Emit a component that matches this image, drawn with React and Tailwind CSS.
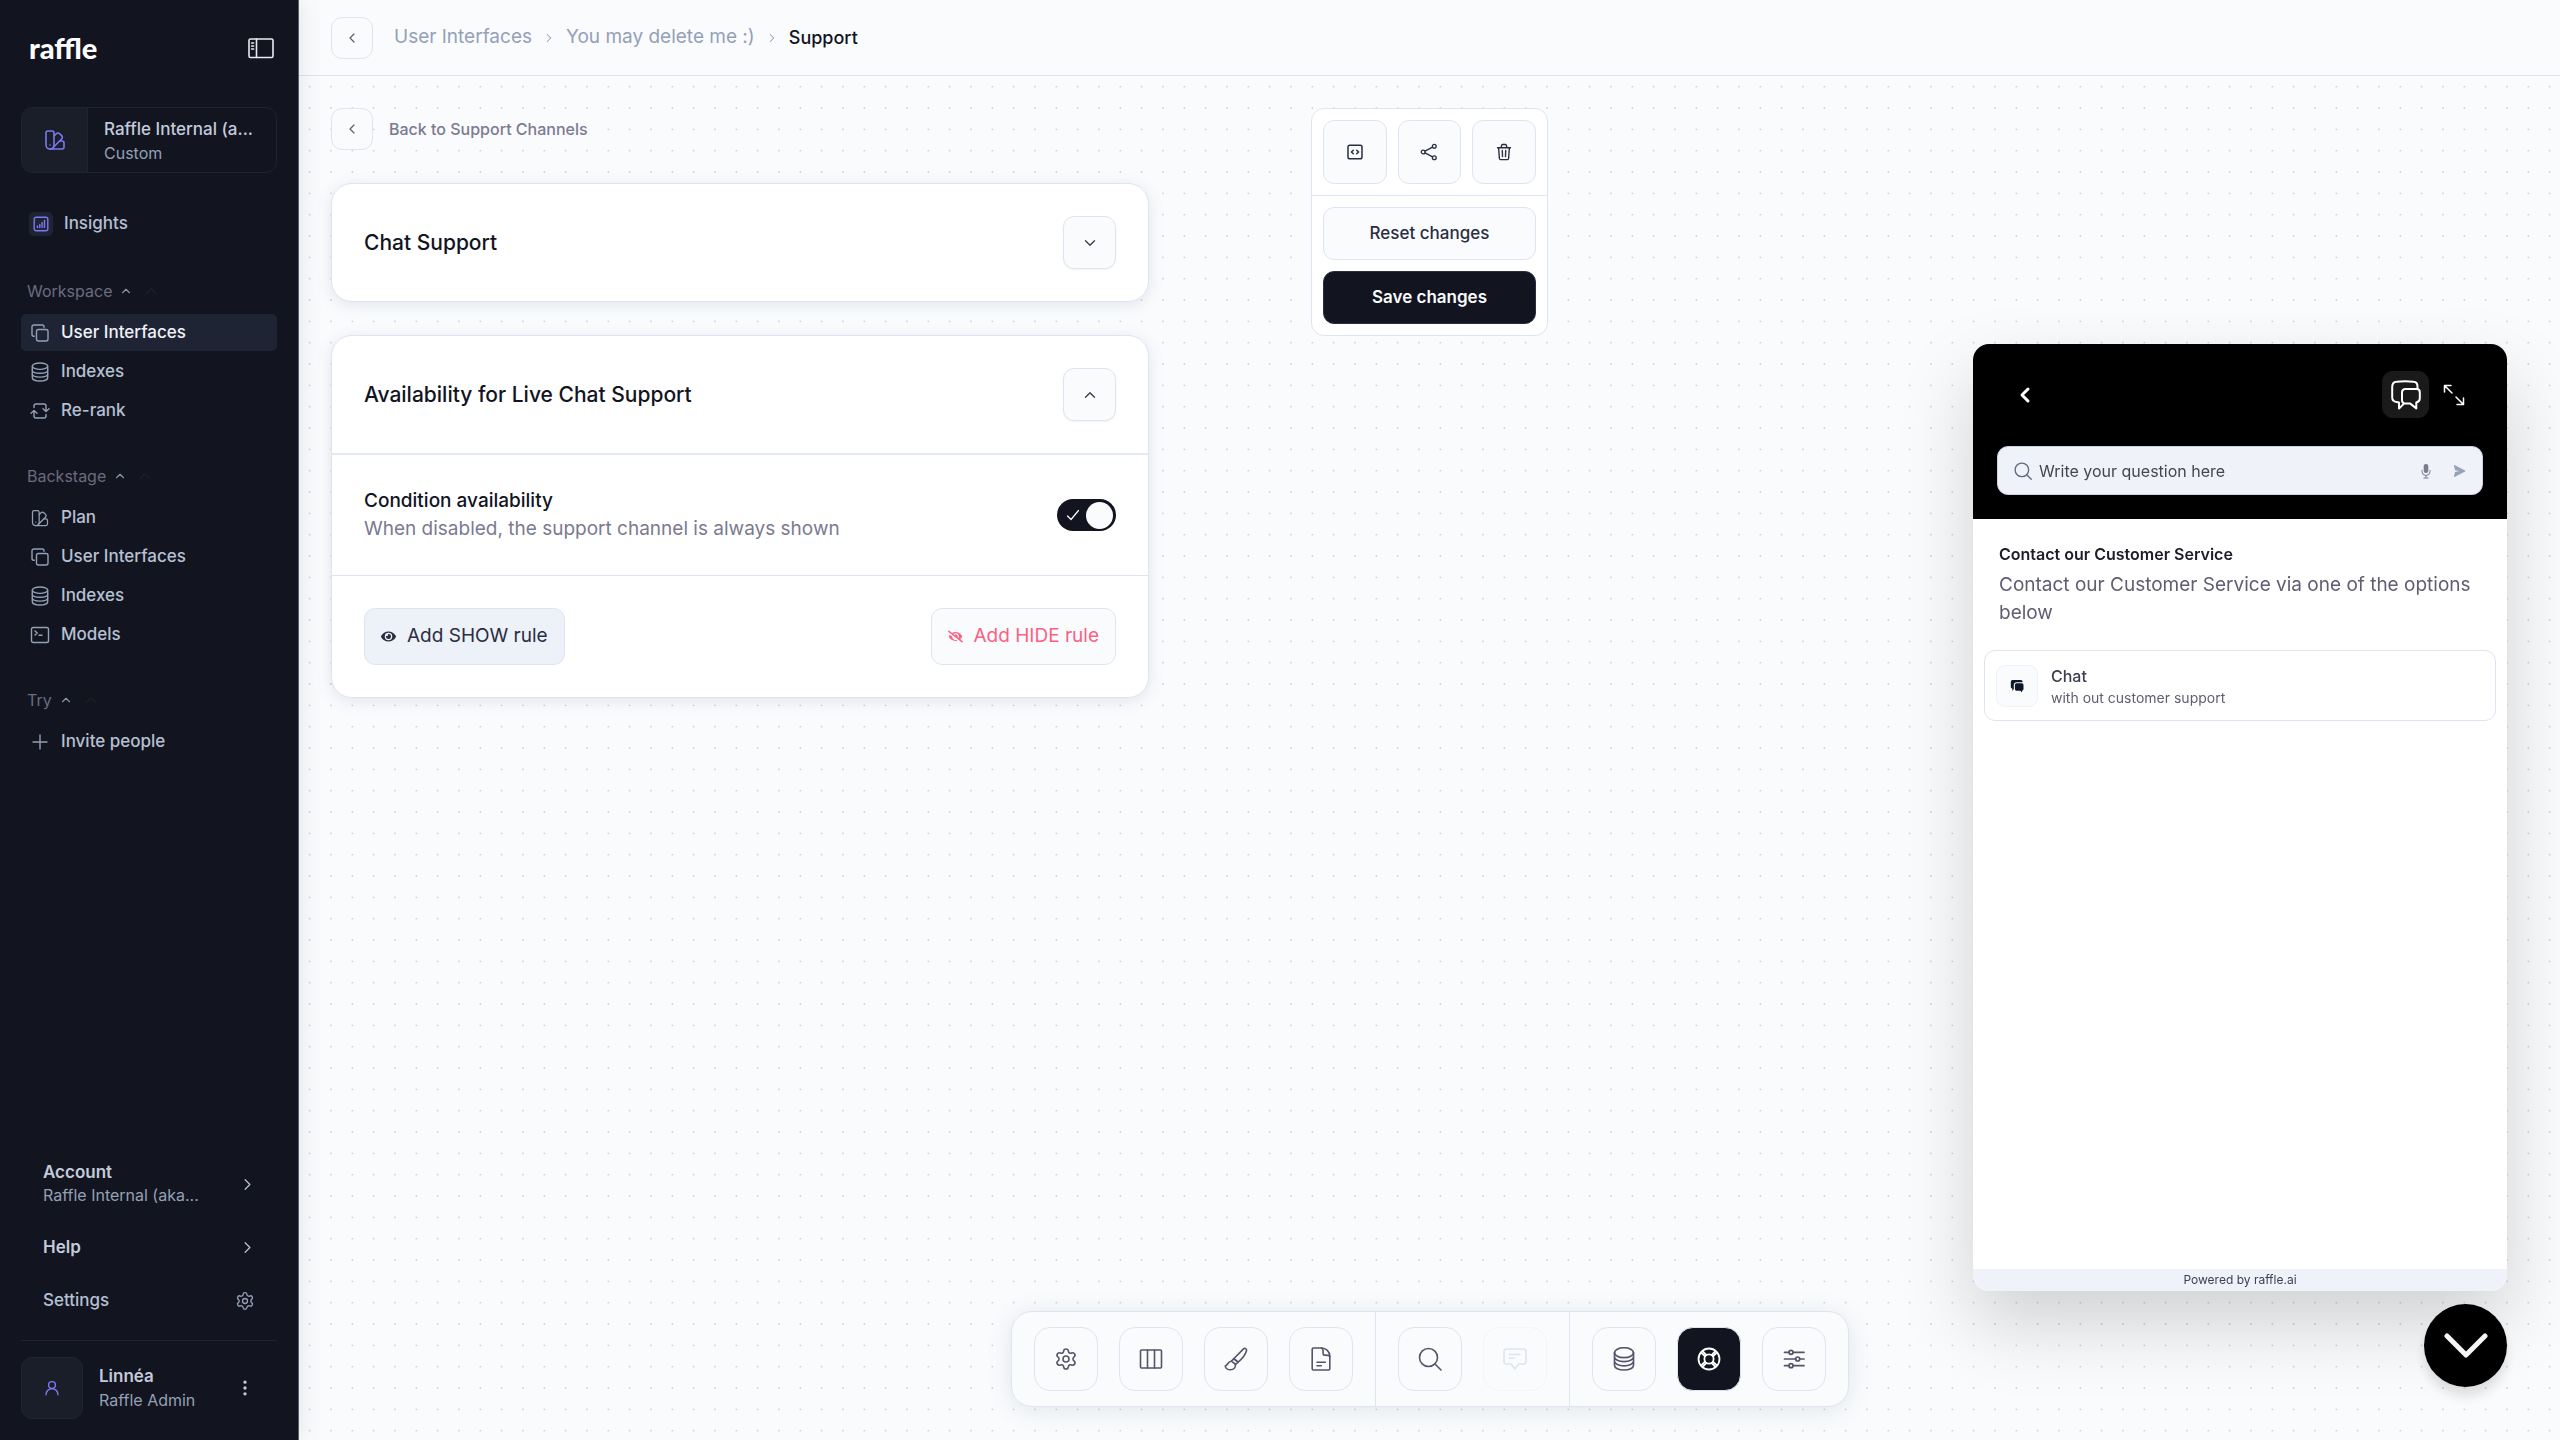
import { useState } from "react";
import { Settings, SwatchBook, EllipsisVertical, ChevronLeft, ChevronRight, ChevronUp, ChevronDown } from "lucide-react";
import { FaEye, FaEyeSlash } from "react-icons/fa";

const Svg = ({ box = 20, className, width = 1.4, children }) => (
  <svg
    viewBox={`0 0 ${box} ${box}`}
    className={className}
    fill="none"
    stroke="currentColor"
    strokeWidth={width}
    strokeLinecap="round"
    strokeLinejoin="round"
    aria-hidden="true"
  >
    {children}
  </svg>
);

const SidebarIcon = (p) => (
  <Svg box={26} width={1.6} {...p}>
    <rect x="1" y="4" width="24" height="18.5" rx="1.5" />
    <path d="M8.500 4v18.500M3.600 8h2M3.600 11h2M3.600 14h2" />
  </Svg>
);

const ChartIcon = (p) => (
  <Svg box={16} width={1.4} {...p}>
    <rect x="1.200" y="1.200" width="13.600" height="13.600" rx="2" />
    <path d="M4.500 11.500v-1.500M6.800 11.500v-3M9.100 11.500v-5M11.500 11.500v-7" />
  </Svg>
);

const CopyIcon = (p) => (
  <Svg {...p}>
    <rect x="6.500" y="6.500" width="11.500" height="11.500" rx="2" />
    <path d="M4.300 13.200H3.800A1.800 1.800 0 0 1 2 11.400V3.800A1.800 1.800 0 0 1 3.800 2h8.400A1.800 1.800 0 0 1 14 3.800v.4" />
  </Svg>
);

const StackIcon = (p) => (
  <Svg {...p}>
    <ellipse cx="10" cy="4.200" rx="7.700" ry="3.200" />
    <path d="M2.300 4.200v11.600c0 1.800 3.400 3.200 7.700 3.200s7.700-1.400 7.700-3.200V4.200" />
    <path d="M2.300 8.200c0 1.700 3.400 3 7.700 3s7.700-1.300 7.700-3M2.300 12.100c0 1.700 3.400 3 7.700 3s7.700-1.300 7.700-3" />
  </Svg>
);

const RerankIcon = (p) => (
  <Svg {...p}>
    <path d="M4 6.500V5a2 2 0 0 1 2-2h8a2 2 0 0 1 2 2v5M13 7.800l3 2.700 3-2.700" />
    <path d="M16 13.500V15a2 2 0 0 1-2 2H6a2 2 0 0 1-2-2v-5M1 12.200l3-2.700 3 2.700" />
  </Svg>
);

const TerminalIcon = (p) => (
  <Svg {...p}>
    <rect x="1.500" y="2.500" width="17" height="15" rx="1.800" />
    <path d="M5 6l2.300 2L5 10M9 10.300h3" />
  </Svg>
);

const PlusIcon = (p) => (
  <Svg {...p}>
    <path d="M10 3v14M3 10h14" />
  </Svg>
);

const UserIcon = (p) => (
  <Svg box={16} {...p}>
    <circle cx="8" cy="5" r="3.400" />
    <path d="M2 14.800c.4-3.800 2.600-6 6-6s5.600 2.200 6 6" />
  </Svg>
);

const CodeIcon = (p) => (
  <Svg box={18} width={1.500} {...p}>
    <rect x="2" y="2.300" width="14" height="13.400" rx="1.800" />
    <path d="M7.300 7.200L5.400 9l1.900 1.800M10.700 7.200L12.600 9l-1.900 1.800" />
  </Svg>
);

const ShareIcon = (p) => (
  <Svg box={18} width={1.300} {...p}>
    <circle cx="3.200" cy="9" r="1.900" />
    <circle cx="14.300" cy="3.200" r="1.900" />
    <circle cx="14.300" cy="14.800" r="1.900" />
    <path d="M5 8.100l7.500-4M5 9.900l7.500 4" />
  </Svg>
);

const TrashIcon = (p) => (
  <Svg box={18} width={1.400} {...p}>
    <path d="M2.500 4.700h13M6 4.500l.8-2.400a.8.800 0 0 1 .8-.6h2.800a.8.800 0 0 1 .8.600l.8 2.400M3.600 4.800l.8 10.700a1.200 1.200 0 0 0 1.200 1.100h6.800a1.200 1.200 0 0 0 1.200-1.100l.8-10.700M7.300 7.500l.2 6M10.700 7.500l-.2 6" />
  </Svg>
);

const ColumnsIcon = (p) => (
  <Svg box={24} {...p} width={1.600}>
    <rect x="1.500" y="3" width="21" height="18" rx="1" />
    <path d="M8.500 3v18M15.500 3v18" />
  </Svg>
);

const BrushIcon = (p) => (
  <Svg box={24} {...p} width={1.600}>
    <path d="M9.700 11.700L19.500 1.900c1.300-1.200 3.600-.2 2.900 2-1 3.400-4.300 7.800-8.300 11.200z" />
    <path d="M9.700 11.700l4.400 3.400-2.600 2.300-4-3.300z" />
    <path d="M7.500 14.300c-3.700-.2-3.500 4-6.300 4.700.5 4.700 10.500 6 10.300-1.600" />
  </Svg>
);

const DocIcon = (p) => (
  <Svg box={24} {...p} width={1.600}>
    <path d="M3.200 2.200A1.200 1.200 0 0 1 4.400 1h8.100c4.500 0 8.300 3.500 8.300 8.200v12.600a1.200 1.200 0 0 1-1.200 1.200H4.400a1.200 1.200 0 0 1-1.200-1.200z" />
    <path d="M12.500 1c1.500.4 1.600 1.900 1.600 3.300 0 1.800-.3 3.800 1.500 3.800 2.800 0 4.800-.2 5.200 1.500M8 15.300h8.300M8 18.800h4.300" />
  </Svg>
);

const SearchIcon = (p) => (
  <Svg box={24} width={1.600} {...p}>
    <circle cx="10.500" cy="10.500" r="9" />
    <path d="M17 17l6 6" />
  </Svg>
);

const MessageIcon = (p) => (
  <Svg box={24} {...p} width={1.700}>
    <path d="M3.500 2h17A2.500 2.500 0 0 1 23 4.500v10a2.500 2.500 0 0 1-2.500 2.500h-4.800L12 22l-3.700-5H3.500A2.500 2.500 0 0 1 1 14.500v-10A2.500 2.500 0 0 1 3.500 2z" />
    <path d="M6.500 7.500H17M6.500 11h5" />
  </Svg>
);

const DatabaseIcon = (p) => (
  <Svg box={24} {...p} width={1.700}>
    <ellipse cx="12" cy="5.700" rx="9.500" ry="5" />
    <path d="M2.500 5.700v12.600c0 2.700 4.200 4.700 9.500 4.700s9.500-2 9.500-4.700V5.700M2.500 10c0 2.600 4.200 4.600 9.500 4.600s9.500-2 9.500-4.600M2.500 14.200c0 2.600 4.200 4.600 9.500 4.600s9.500-2 9.500-4.600" />
  </Svg>
);

const LifebuoyIcon = (p) => (
  <Svg box={24} {...p} width={1.800}>
    <circle cx="12" cy="12" r="10.500" />
    <circle cx="12" cy="12" r="4.600" />
    <path d="M7.800 9.200L4.200 5.600M9.200 7.800L5.600 4.200M14.800 7.800l3.600-3.600M16.200 9.200l3.600-3.600M16.200 14.800l3.600 3.600M14.800 16.200l3.600 3.600M9.200 16.200l-3.600 3.600M7.800 14.800l-3.600 3.600" />
  </Svg>
);

const SlidersIcon = (p) => (
  <Svg box={24} {...p} width={1.700}>
    <path d="M2.500 5.300H7M11 5.300h11M2.500 12h11.200M17.700 12H22M2.500 18.700H7M11 18.700h11" />
    <circle cx="9" cy="5.300" r="2" />
    <circle cx="15.700" cy="12" r="2" />
    <circle cx="9" cy="18.700" r="2" />
  </Svg>
);

const ChatsIcon = (p) => (
  <Svg box={30} width={2} {...p}>
    <path d="M26.500 9V6.500C26.500 3.500 25 2 22.500 1.800c-5.500-.6-11.500-.6-17 0C3 2 1.200 4 1.200 7v10.500c0 2.500 1.300 4 4.300 4.600L8 22.600v6l5-5h6.300l6 4.800v-6l.5-.2c2-.4 3-2 3-4v-6c0-2-1.300-3.200-3.300-3.200h-11c-2.200 0-3.500 1.300-3.500 3.500v7.500c0 2 .7 3.200 2.500 3.600" />
  </Svg>
);

const ChatsSolidIcon = ({ className }) => (
  <svg viewBox="0 0 14 14" className={className} fill="currentColor" aria-hidden="true">
    <path d="M2.500 1h8.500a1.500 1.500 0 0 1 1.500 1.500v.8H7A3.200 3.200 0 0 0 3.800 6.500V10L2.600 12 2.200 9.500A1.800 1.800 0 0 1 .8 7.700V2.700A1.700 1.700 0 0 1 2.500 1z" />
    <path d="M6.600 4.200h5.200a1.700 1.700 0 0 1 1.700 1.700v4a1.700 1.700 0 0 1-1.200 1.700L12 13.300l-1.900-1.600H6.600a1.700 1.700 0 0 1-1.700-1.700v-4a1.700 1.700 0 0 1 1.700-1.700z" />
  </svg>
);

const ExpandIcon = (p) => (
  <Svg box={22} width={1.500} {...p}>
    <path d="M1.500 8V1.500H8M1.500 1.500l7.500 7.500M20.500 14v6.500H14M20.500 20.500L13 13" />
  </Svg>
);

const MicIcon = ({ className }) => (
  <svg viewBox="0 0 16 16" className={className} aria-hidden="true">
    <rect x="5.700" y="1" width="4.600" height="9" rx="2.300" fill="currentColor" />
    <path d="M4 7v1.500a4 4 0 0 0 8 0V7M8 12.500V15M5.500 15h5" fill="none" stroke="currentColor" strokeWidth="1" />
  </svg>
);

const SendIcon = ({ className }) => (
  <svg viewBox="0 0 16 16" className={className} fill="currentColor" aria-hidden="true">
    <path d="M2.200 1.600a.5.500 0 0 1 .7-.5l12 6.400a.5.500 0 0 1 0 1l-12 6.400a.5.500 0 0 1-.7-.5L3.500 9l5-1-5-1z" />
  </svg>
);

// the tile is three dots wide, so that the dots fall a third of 64px apart
const Dots = () => {
  const spots = [0, 1, 2].map((n) => ((n + 0.5) * 64) / 3);
  return (
    <svg className="absolute inset-0 size-full text-[#ccd3e0]" aria-hidden="true">
      <pattern id="dots" width="64" height="64" patternUnits="userSpaceOnUse">
        {spots.map((x) => spots.map((y) => <circle key={`${x}-${y}`} cx={x} cy={y} r="0.900" fill="currentColor" />))}
      </pattern>
      <rect width="100%" height="100%" fill="url(#dots)" />
    </svg>
  );
};

const PlanIcon = ({ className }) => <SwatchBook className={className} strokeWidth={1.5} />;

const navGroups = [
  {
    title: "Workspace",
    items: [
      { label: "User Interfaces", icon: CopyIcon, active: true },
      { label: "Indexes", icon: StackIcon },
      { label: "Re-rank", icon: RerankIcon },
    ],
  },
  {
    title: "Backstage",
    items: [
      { label: "Plan", icon: PlanIcon },
      { label: "User Interfaces", icon: CopyIcon },
      { label: "Indexes", icon: StackIcon },
      { label: "Models", icon: TerminalIcon },
    ],
  },
  { title: "Try", items: [{ label: "Invite people", icon: PlusIcon }] },
];

const NavGroup = ({ title, items }) => (
  <section className="mt-[35px]">
    <button className="ml-[6px] flex h-6 items-center text-base text-[#6c6b80]">
      {title}
      <ChevronUp className="ml-[7px] size-[14px] text-[#8a93a8]" strokeWidth={2} />
      <ChevronUp className="ml-[9px] size-[18px] text-[#1f1e22]" strokeWidth={2} />
    </button>
    <ul className="mt-[11px] flex flex-col gap-[2px]">
      {items.map(({ label, icon: Icon, active }) => (
        <li key={label}>
          <a
            href="#"
            className={
              active
                ? "flex h-[37px] items-center gap-[11px] rounded-[5px] bg-[#1f2435] pl-[9px] text-[17px] font-medium text-[#eef2f8]"
                : "flex h-[37px] items-center gap-[11px] rounded-[5px] pl-[9px] text-[17px] font-medium text-[#b6c0d3]"
            }
          >
            <Icon className="size-5 text-[#94a0b5]" />
            {label}
          </a>
        </li>
      ))}
    </ul>
  </section>
);

const Sidebar = () => (
  <aside className="relative z-10 flex w-[299px] shrink-0 flex-col border-r border-[#5a5d68] bg-[#12141f] px-[21px] pb-[21px] shadow-[0_0_24px_rgba(15,23,42,0.1)]">
    <div className="mt-[32px] flex h-8 items-center justify-between pl-2 pr-[3px]">
      <span className="font-['Lato'] text-[29px] leading-8 font-black text-white">raffle</span>
      <button aria-label="Collapse sidebar">
        <SidebarIcon className="size-[26px] text-[#e8ebf2]" />
      </button>
    </div>

    <button className="mt-[43px] flex h-[66px] shrink-0 overflow-hidden rounded-[11px] border border-[#1f2435] text-left">
      <span className="flex h-full w-[66px] shrink-0 items-center justify-center border-r border-[#1f2435] bg-[#1a1e29]">
        <SwatchBook className="size-6 text-[#7c78f0]" strokeWidth={1.6} />
      </span>
      <span className="flex h-full flex-1 flex-col justify-center px-4 pt-[2px] whitespace-nowrap">
        <span className="text-[17px] leading-6 font-medium text-[#c3cbdb]">Raffle Internal (a...</span>
        <span className="text-base leading-6 text-[#94a0b5]">Custom</span>
      </span>
    </button>

    <a href="#" className="mt-[32px] flex h-[37px] items-center gap-[11px] pl-2 text-[17px] font-medium text-[#b6c0d3]">
      <span className="flex size-6 items-center justify-center rounded-[5px] bg-[#1f2435]">
        <ChartIcon className="size-4 text-[#7c78f0]" />
      </span>
      Insights
    </a>

    <nav className="mt-[2px]">
      {navGroups.map((group) => (
        <NavGroup key={group.title} {...group} />
      ))}
    </nav>

    <div className="mt-auto">
      <button className="flex h-[64px] w-full items-center justify-between pl-[22px] pr-5 text-left">
        <span>
          <span className="block text-[17px] leading-[23px] font-semibold text-[#c3cbdb]">Account</span>
          <span className="block text-base leading-[23px] text-[#94a0b5]">Raffle Internal (aka...</span>
        </span>
        <ChevronRight className="size-[19px] text-[#b6c0d3]" strokeWidth={1.6} />
      </button>
      <button className="mt-[5px] flex h-[53px] w-full items-center justify-between pl-[22px] pr-5 text-[17px] font-semibold text-[#c3cbdb]">
        Help
        <ChevronRight className="size-[19px] text-[#b6c0d3]" strokeWidth={1.6} />
      </button>
      <button className="flex h-[53px] w-full items-center justify-between pl-[22px] pr-[22px] text-[17px] font-medium text-[#b6c0d3]">
        Settings
        <Settings className="size-5 text-[#94a0b5]" strokeWidth={1.6} />
      </button>
      <div className="mt-[13px] flex items-center border-t border-[#1f2435] pt-4">
        <span className="flex size-[62px] items-center justify-center rounded-[11px] border border-[#1f2435] bg-[#1a1e29]">
          <UserIcon className="size-4 text-[#7c78f0]" />
        </span>
        <span className="ml-4">
          <span className="block text-[17px] leading-6 font-semibold text-[#c3cbdb]">Linnéa</span>
          <span className="block text-base leading-6 text-[#94a0b5]">Raffle Admin</span>
        </span>
        <button className="mr-[22px] ml-auto" aria-label="Account menu">
          <EllipsisVertical className="size-5 text-[#c3cbdb]" strokeWidth={2} />
        </button>
      </div>
    </div>
  </aside>
);

const BackButton = ({ label }) => (
  <button aria-label={label} className="flex size-[42px] items-center justify-center rounded-[11px] border border-[#dfe5f0] bg-[#fafbfd] text-[#5f5e72]">
    <ChevronLeft className="size-4" strokeWidth={1.8} />
  </button>
);

const ToggleCard = ({ label, open, onClick }) => (
  <button
    aria-label={label}
    onClick={onClick}
    className="flex size-[53px] items-center justify-center rounded-[11px] border border-[#dfe5f0] bg-[#fafbfd] text-[#3d3f50] shadow-[0_1px_2px_rgba(15,23,42,0.05)]"
  >
    {open ? <ChevronUp className="size-[18px]" strokeWidth={1.8} /> : <ChevronDown className="size-[18px]" strokeWidth={1.8} />}
  </button>
);

const Card = ({ children }) => (
  <section className="overflow-hidden rounded-[21px] border border-[#dfe5f0] bg-white shadow-[0_3px_16px_rgba(71,105,130,0.14)]">{children}</section>
);

const ToolButton = ({ label, icon: Icon, active, disabled }) => (
  <button
    aria-label={label}
    disabled={disabled}
    className={
      active
        ? "flex size-16 items-center justify-center rounded-[16px] border border-[#dfe5f0] bg-[#12141f] text-white"
        : disabled
          ? "flex size-16 items-center justify-center rounded-[16px] border border-[#f3f5f9] text-[#dfe5f0]"
          : "flex size-16 items-center justify-center rounded-[16px] border border-[#dfe5f0] text-[#55546a]"
    }
  >
    <Icon className="size-6" strokeWidth={1.6} />
  </button>
);

const toolGroups = [
  [
    { label: "Settings", icon: Settings },
    { label: "Layout", icon: ColumnsIcon },
    { label: "Design", icon: BrushIcon },
    { label: "Content", icon: DocIcon },
  ],
  [
    { label: "Search", icon: SearchIcon },
    { label: "Chat", icon: MessageIcon, disabled: true },
  ],
  [
    { label: "Indexes", icon: DatabaseIcon },
    { label: "Support", icon: LifebuoyIcon, active: true },
    { label: "Options", icon: SlidersIcon },
  ],
];

const Widget = () => (
  <div className="fixed right-[53px] bottom-[53px] z-20 flex flex-col items-end gap-[13px]">
    <section className="flex h-[947px] max-h-[90vh] w-[534px] flex-col overflow-hidden rounded-[16px] bg-white shadow-[0_33px_75px_rgba(0,0,0,0.17)]">
      <div className="bg-black px-6 pt-[27px] pb-6">
        <div className="flex h-[47px] items-center">
          <button aria-label="Back" className="ml-4 text-white">
            <ChevronLeft className="size-6" strokeWidth={3} />
          </button>
          <button aria-label="Support" className="ml-auto flex size-[47px] items-center justify-center rounded-[11px] bg-[#1a1a1a] text-white">
            <ChatsIcon className="size-[30px]" />
          </button>
          <button aria-label="Expand" className="mr-[18px] ml-[14px] text-white">
            <ExpandIcon className="size-[22px]" />
          </button>
        </div>
        <form className="mt-7 mb-0 flex h-[49px] items-center rounded-[11px] border border-[#cbd5e1] bg-[#eff2f8] px-4">
          <SearchIcon className="size-[18px] shrink-0 text-[#5f6b85]" width={1.8} />
          <input
            aria-label="Question"
            placeholder="Write your question here"
            className="min-w-0 flex-1 bg-transparent pl-[7px] text-base text-[#3d3f50] outline-none placeholder:text-[#45464f]"
          />
          <button type="button" aria-label="Dictate" className="text-[#7b7a90]">
            <MicIcon className="size-4" />
          </button>
          <button type="button" aria-label="Send" className="ml-[18px] text-[#94a3b8]">
            <SendIcon className="size-[14px]" />
          </button>
        </form>
      </div>
      <div className="px-[26px] pt-[23px]">
        <h2 className="text-base leading-6 font-semibold text-[#1c1d26]">Contact our Customer Service</h2>
        <p className="mt-[5px] text-[19px] leading-7 text-[#5f5e72]">Contact our Customer Service via one of the options below</p>
      </div>
      <a href="#" className="mx-[11px] mt-[23px] flex h-[71px] items-center rounded-[11px] border border-[#dfe5f0] px-[11px]">
        <span className="flex size-[42px] items-center justify-center rounded-[9px] border border-[#eff2f8] bg-[#fafbfd]">
          <ChatsSolidIcon className="size-[14px] text-[#0f172a]" />
        </span>
        <span className="ml-[13px]">
          <span className="block text-base leading-6 font-medium text-[#3d3f50]">Chat</span>
          <span className="block text-sm leading-5 text-[#5f5e72]">with out customer support</span>
        </span>
      </a>
      <footer className="mt-auto bg-[#eff2f8] text-center text-xs leading-[22px] text-[#3d3f50]">Powered by raffle.ai</footer>
    </section>
    <button aria-label="Close widget" className="flex size-[83px] items-center justify-center rounded-full bg-black text-[#f5f5f5] shadow-[0_9px_12px_rgba(0,0,0,0.12)]">
      <svg viewBox="0 0 44 26" className="w-[44px]" fill="none" stroke="currentColor" strokeWidth="5" strokeLinecap="round" strokeLinejoin="round" aria-hidden="true">
        <path d="M3 3l19 19L41 3" />
      </svg>
    </button>
  </div>
);

export default function App() {
  const [chatOpen, setChatOpen] = useState(false);
  const [rulesOpen, setRulesOpen] = useState(true);
  const [conditional, setConditional] = useState(true);

  return (
    <div className="flex min-h-screen bg-[#fafbfd] font-['Inter',sans-serif] text-[#12141f]">
      <Sidebar />

      <div className="flex min-w-0 flex-1 flex-col">
        <header className="flex h-[76px] items-center border-b border-[#dfe5f0] px-[32px]">
          <BackButton label="Back to previous page" />
          <nav aria-label="Breadcrumb" className="ml-[21px] flex items-center gap-[10px] text-[19px] text-[#94a0b8]">
            <a href="#">User Interfaces</a>
            <ChevronRight className="size-[14px]" strokeWidth={1.8} />
            <a href="#">You may delete me :)</a>
            <ChevronRight className="size-[14px]" strokeWidth={1.8} />
            <a href="#" className="text-lg font-medium text-[#12141f]">
              Support
            </a>
          </nav>
        </header>

        <main className="relative flex flex-1 flex-col">
          <Dots />

          <div className="relative grid grid-cols-[1fr_auto_1fr] items-start pt-[32px]">
            <div className="pr-[162px] pl-[32px]">
              <div className="flex items-center">
                <BackButton label="Back to Support Channels" />
                <a href="#" className="ml-4 bg-[#fafbfd] text-base font-medium text-[#7b7a90]">
                  Back to Support Channels
                </a>
              </div>

              <div className="mt-[33px] flex flex-col gap-[33px]">
                <Card>
                  <div className="flex items-center justify-between p-[32px]">
                    <h2 className="text-[21px] leading-7 font-medium">Chat Support</h2>
                    <ToggleCard label="Toggle Chat Support" open={chatOpen} onClick={() => setChatOpen(!chatOpen)} />
                  </div>
                </Card>

                <Card>
                  <div className="flex items-center justify-between p-[32px]">
                    <h2 className="text-[21px] leading-7 font-medium">Availability for Live Chat Support</h2>
                    <ToggleCard label="Toggle availability" open={rulesOpen} onClick={() => setRulesOpen(!rulesOpen)} />
                  </div>
                  {rulesOpen && (
                    <>
                      <label className="flex cursor-pointer items-center justify-between border-t-2 border-[#e4eaf4] p-[32px]">
                        <span>
                          <span className="block text-[19px] leading-7 font-medium">Condition availability</span>
                          <span className="block text-[19px] leading-7 text-[#7b7a90]">When disabled, the support channel is always shown</span>
                        </span>
                        <input
                          type="checkbox"
                          role="switch"
                          className="peer sr-only"
                          checked={conditional}
                          onChange={(e) => setConditional(e.target.checked)}
                        />
                        <span className="flex h-8 w-[59px] items-center justify-between rounded-full bg-[#94a0b8] pr-[3px] pl-[9px] peer-checked:bg-[#12141f]">
                          <Svg box={14} className="size-[14px] text-white" width={1.2}>
                            <path d="M1.500 8l3.500 3.500L12.500 2.500" />
                          </Svg>
                          <span className="size-[27px] rounded-full bg-[#fafbfd]" />
                        </span>
                      </label>
                      <div className="flex justify-between border-t border-[#dfe5f0] p-[32px]">
                        <button className="flex h-[57px] items-center gap-[11px] rounded-[11px] border border-[#dfe5f0] bg-[#edf1f8] px-4 text-[19px] text-[#2b2d42]">
                          <FaEye className="size-[15px]" />
                          Add SHOW rule
                        </button>
                        <button className="flex h-[57px] items-center gap-[11px] rounded-[11px] border border-[#dfe5f0] bg-[#fafbfd] px-4 text-[19px] text-[#fb6183]">
                          <FaEyeSlash className="size-[15px]" />
                          Add HIDE rule
                        </button>
                      </div>
                    </>
                  )}
                </Card>
              </div>
            </div>

            <div className="w-[237px] rounded-[13px] border border-[#dfe5f0] bg-white text-[#2b2d42]">
              <div className="grid grid-cols-3 gap-[11px] border-b border-[#dfe5f0] p-[11px]">
                {[
                  { label: "Embed code", icon: CodeIcon },
                  { label: "Share", icon: ShareIcon },
                  { label: "Delete", icon: TrashIcon },
                ].map(({ label, icon: Icon }) => (
                  <button key={label} aria-label={label} className="flex h-16 items-center justify-center rounded-[11px] border border-[#dfe5f0] bg-[#fafbfd]">
                    <Icon className="size-[18px]" />
                  </button>
                ))}
              </div>
              <div className="flex flex-col gap-[11px] p-[11px] text-[17px] font-medium">
                <button className="h-[53px] rounded-[11px] border border-[#dfe5f0] bg-[#fafbfd]">Reset changes</button>
                <button className="h-[53px] rounded-[11px] border border-[#2b2d42] bg-[#12141f] font-semibold text-[#fafbfd]">Save changes</button>
              </div>
            </div>
          </div>

          <div className="relative mx-auto mt-auto mb-[33px] flex divide-x divide-[#dfe5f0] rounded-[21px] border border-[#dfe5f0] bg-[#fafbfd] shadow-[0_3px_24px_rgba(71,105,130,0.14)]">
            {toolGroups.map((tools) => (
              <div key={tools[0].label} className="flex gap-[21px] px-[22px] py-[15px]">
                {tools.map((tool) => (
                  <ToolButton key={tool.label} {...tool} />
                ))}
              </div>
            ))}
          </div>
        </main>
      </div>

      <Widget />
    </div>
  );
}
